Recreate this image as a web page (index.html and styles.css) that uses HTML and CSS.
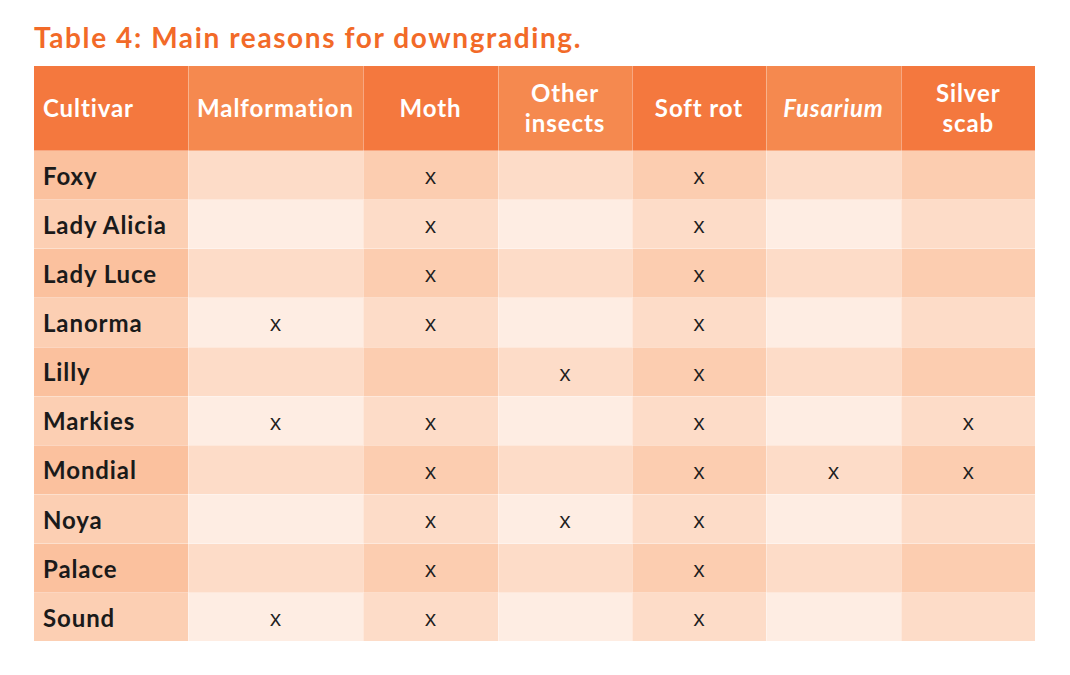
FILE: index.html
```html
<!DOCTYPE html>
<html>
<head>
<meta charset="utf-8">
<link rel="stylesheet" href="styles.css">
</head>
<body>
<div class="page">
  <h1 class="title">Table 4: Main reasons for downgrading.</h1>
  <table class="tbl">
    <colgroup>
      <col class="c1"><col class="c2"><col class="c3"><col class="c4"><col class="c5"><col class="c6"><col class="c7">
    </colgroup>
    <thead>
      <tr>
        <th class="first d">Cultivar</th>
        <th class="l">Malformation</th>
        <th class="d">Moth</th>
        <th class="l">Other<br>insects</th>
        <th class="d">Soft rot</th>
        <th class="l"><em>Fusarium</em></th>
        <th class="d">Silver<br>scab</th>
      </tr>
    </thead>
    <tbody>
      <tr class="odd"><td class="name">Foxy</td><td class="l"></td><td class="d">x</td><td class="l"></td><td class="d">x</td><td class="l"></td><td class="d"></td></tr>
      <tr class="even"><td class="name">Lady Alicia</td><td class="l"></td><td class="d">x</td><td class="l"></td><td class="d">x</td><td class="l"></td><td class="d"></td></tr>
      <tr class="odd"><td class="name">Lady Luce</td><td class="l"></td><td class="d">x</td><td class="l"></td><td class="d">x</td><td class="l"></td><td class="d"></td></tr>
      <tr class="even"><td class="name">Lanorma</td><td class="l">x</td><td class="d">x</td><td class="l"></td><td class="d">x</td><td class="l"></td><td class="d"></td></tr>
      <tr class="odd"><td class="name">Lilly</td><td class="l"></td><td class="d"></td><td class="l">x</td><td class="d">x</td><td class="l"></td><td class="d"></td></tr>
      <tr class="even"><td class="name">Markies</td><td class="l">x</td><td class="d">x</td><td class="l"></td><td class="d">x</td><td class="l"></td><td class="d">x</td></tr>
      <tr class="odd"><td class="name">Mondial</td><td class="l"></td><td class="d">x</td><td class="l"></td><td class="d">x</td><td class="l">x</td><td class="d">x</td></tr>
      <tr class="even"><td class="name">Noya</td><td class="l"></td><td class="d">x</td><td class="l">x</td><td class="d">x</td><td class="l"></td><td class="d"></td></tr>
      <tr class="odd"><td class="name">Palace</td><td class="l"></td><td class="d">x</td><td class="l"></td><td class="d">x</td><td class="l"></td><td class="d"></td></tr>
      <tr class="even"><td class="name">Sound</td><td class="l">x</td><td class="d">x</td><td class="l"></td><td class="d">x</td><td class="l"></td><td class="d"></td></tr>
    </tbody>
  </table>
</div>
</body>
</html>
```
FILE: styles.css
```css
html, body {
  margin: 0;
  padding: 0;
  background: #ffffff;
}
.page {
  padding: 21px 0 0 34px;
  font-family: Lato, "Open Sans", "Noto Sans", sans-serif;
}
.title {
  margin: 0 0 12px 0;
  font-size: 28px;
  line-height: 33px;
  font-weight: 700;
  color: #f26a28;
  letter-spacing: 1.6px;
}
.tbl {
  border-collapse: collapse;
  table-layout: fixed;
  width: 1001px;
}
.c1 { width: 154px; }
.c2 { width: 175px; }
.c3 { width: 135px; }
.c4 { width: 134px; }
.c5 { width: 134px; }
.c6 { width: 135px; }
.c7 { width: 134px; }
.tbl th, .tbl td {
  border: 1px solid rgba(255, 255, 255, 0.35);
  padding: 0;
}
.tbl tr:first-child th { border-top: none; }
.tbl th:first-child, .tbl td:first-child { border-left: none; }
.tbl th:last-child, .tbl td:last-child { border-right: none; }
.tbl tr:last-child td { border-bottom: none; }
.tbl th {
  height: 84px;
  color: #ffffff;
  font-size: 24px;
  line-height: 30px;
  font-weight: 700;
  text-align: center;
  letter-spacing: 0.9px;
}
.tbl th.first {
  text-align: left;
  padding-left: 9px;
}
.tbl th em { font-style: italic; }
.tbl th.d { background: #f4783e; }
.tbl th.l { background: #f5894f; }
.tbl td {
  height: 48.15px;
  text-align: center;
  font-size: 22px;
  color: #1e1e1e;
  font-family: "Open Sans", Lato, sans-serif;
  font-weight: 400;
}
.tbl td.name {
  text-align: left;
  padding-left: 9px;
  font-family: Lato, "Open Sans", sans-serif;
  font-weight: 700;
  font-size: 24px;
  letter-spacing: 0.9px;
  color: #1a1a1a;
}
.odd td.name { background: #fbc19e; }
.even td.name { background: #fccfb3; }
.odd td.d { background: #fccdb0; }
.even td.d { background: #fddcc8; }
.odd td.l { background: #fddcc8; }
.even td.l { background: #feede3; }
```
